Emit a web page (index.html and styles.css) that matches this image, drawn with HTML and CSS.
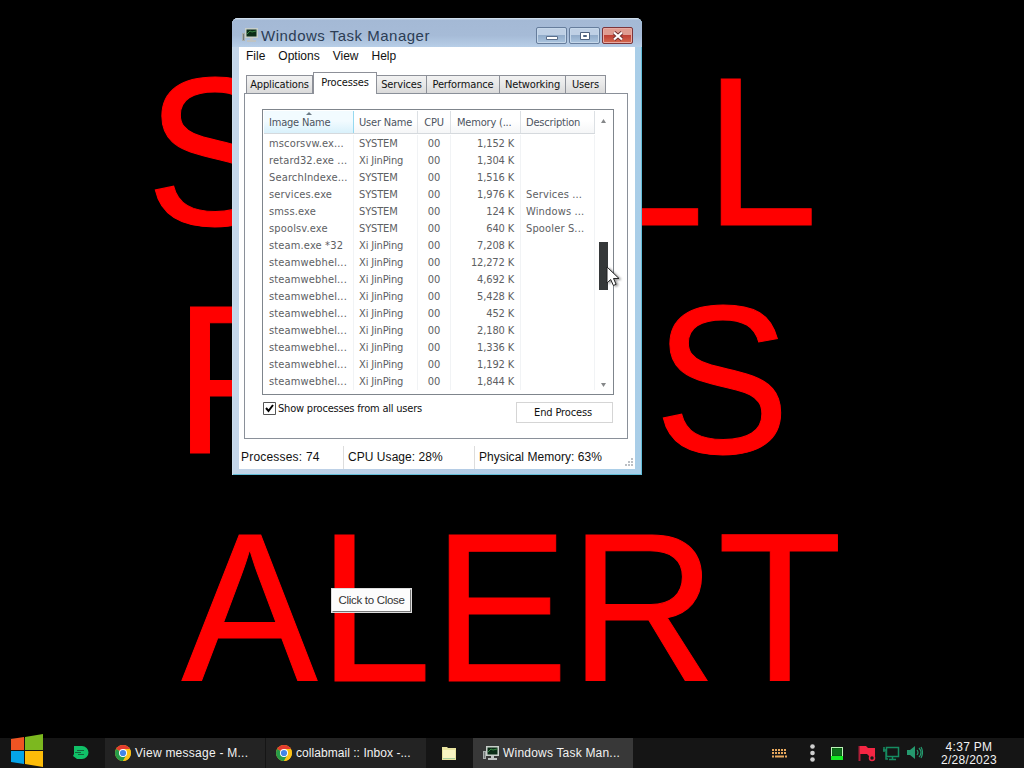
FILE: index.html
```
<!DOCTYPE html>
<html lang="en">
<head>
    <meta charset="UTF-8">
    <meta name="viewport" content="width=device-width, initial-scale=1.0">
    <title>Windows Task Manager</title>
    <link rel="stylesheet" href="styles.css">
</head>
<body>
    <!-- Icons used more than once -->
    <svg class="defs" width="0" height="0">
        <symbol id="chrome" viewBox="0 0 16 16">
            <circle cx="8" cy="8" r="8" fill="#fbc116"/>
            <path d="M8 8L1.1 4A8 8 0 0 1 14.9 4z" fill="#e33b2e"/>
            <path d="M1.1 4A8 8 0 0 0 8 16L11.5 10L8 8z" fill="#269b48"/>
            <path d="M8 4H14.9A8 8 0 0 1 8 16L11.5 10z" fill="#fbc116"/>
            <circle cx="8" cy="8" r="4" fill="#fff"/>
            <circle cx="8" cy="8" r="3.1" fill="#4285e8"/>
        </symbol>
        <symbol id="monitor" viewBox="0 0 16 14">
            <path d="M0 5h3v8H0z" fill="#a9aeac"/>
            <path d="M1 6h1v6H1z" fill="#737978"/>
            <path d="M3 0h13v10H3z" fill="#c8cfca"/>
            <path d="M4.500 1.500h10v7h-10z" fill="#0b2c16"/>
            <path d="M5 6l3-3 2 1 4-1" stroke="#3d8948" fill="none"/>
            <path d="M8 10h3v2h3v2H5v-2h3z" fill="#bfc3c2"/>
        </symbol>
    </svg>

    <div class="desktop">
        <div class="alert">
            <div class="alert-line first"><span>S</span><span>LL</span></div>
            <div class="alert-line second"><span>P</span><span>S</span></div>
            <div class="alert-line third">ALERT</div>
        </div>
        <button class="close-alert">Click to Close</button>

        <!-- Task Manager -->
        <div class="window">
            <div class="titlebar">
                <svg class="title-icon"><use href="#monitor"/></svg>
                <span class="title">Windows Task Manager</span>
                <div class="window-buttons">
                    <div class="window-button"><svg width="14" height="10"><path d="M1.500 5.500h11v3h-11z" fill="#fff" stroke="#5b6f8c"/></svg></div>
                    <div class="window-button"><svg width="12" height="10"><path d="M1.500 1.500h9v7h-9z" fill="#fff" stroke="#4d617e"/><path d="M4.500 4.500h3v1h-3z" fill="#9bb4d4" stroke="#4d617e"/></svg></div>
                    <div class="window-button close"><svg width="12" height="10"><path d="M2 1.500l8 7M10 1.500l-8 7" stroke="#6f3131" stroke-width="4"/><path d="M2 1.500l8 7M10 1.500l-8 7" stroke="#fff" stroke-width="2.200"/></svg></div>
                </div>
            </div>
            <div class="client">
                <div class="menu"><span>File</span><span>Options</span><span>View</span><span>Help</span></div>
                <div class="tabs">
                    <div class="tab applications">Applications</div>
                    <div class="tab processes active">Processes</div>
                    <div class="tab services">Services</div>
                    <div class="tab performance">Performance</div>
                    <div class="tab networking">Networking</div>
                    <div class="tab users">Users</div>
                </div>
                <div class="panel">
                    <div class="list">
                        <div class="table">
                            <div class="row header"><span class="sorted">Image Name<i></i></span><span>User Name</span><span>CPU</span><span>Memory (...</span><span>Description</span></div>
                            <div class="row"><span>mscorsvw.ex...</span><span>SYSTEM</span><span>00</span><span>1,152 K</span><span></span></div>
                            <div class="row"><span>retard32.exe ...</span><span>Xi JinPing</span><span>00</span><span>1,304 K</span><span></span></div>
                            <div class="row"><span>SearchIndexe...</span><span>SYSTEM</span><span>00</span><span>1,516 K</span><span></span></div>
                            <div class="row"><span>services.exe</span><span>SYSTEM</span><span>00</span><span>1,976 K</span><span>Services ...</span></div>
                            <div class="row"><span>smss.exe</span><span>SYSTEM</span><span>00</span><span>124 K</span><span>Windows ...</span></div>
                            <div class="row"><span>spoolsv.exe</span><span>SYSTEM</span><span>00</span><span>640 K</span><span>Spooler S...</span></div>
                            <div class="row"><span>steam.exe *32</span><span>Xi JinPing</span><span>00</span><span>7,208 K</span><span></span></div>
                            <div class="row"><span>steamwebhel...</span><span>Xi JinPing</span><span>00</span><span>12,272 K</span><span></span></div>
                            <div class="row"><span>steamwebhel...</span><span>Xi JinPing</span><span>00</span><span>4,692 K</span><span></span></div>
                            <div class="row"><span>steamwebhel...</span><span>Xi JinPing</span><span>00</span><span>5,428 K</span><span></span></div>
                            <div class="row"><span>steamwebhel...</span><span>Xi JinPing</span><span>00</span><span>452 K</span><span></span></div>
                            <div class="row"><span>steamwebhel...</span><span>Xi JinPing</span><span>00</span><span>2,180 K</span><span></span></div>
                            <div class="row"><span>steamwebhel...</span><span>Xi JinPing</span><span>00</span><span>1,336 K</span><span></span></div>
                            <div class="row"><span>steamwebhel...</span><span>Xi JinPing</span><span>00</span><span>1,192 K</span><span></span></div>
                            <div class="row"><span>steamwebhel...</span><span>Xi JinPing</span><span>00</span><span>1,844 K</span><span></span></div>
                        </div>
                        <div class="scrollbar">
                            <svg width="7" height="4"><path d="M1 4L3.500 0L6 4z" fill="#858789"/></svg>
                            <div class="thumb"></div>
                            <svg width="7" height="4"><path d="M1 0L3.500 4L6 0z" fill="#858789"/></svg>
                        </div>
                    </div>
                    <div class="actions">
                        <div class="check">
                            <svg width="13" height="13"><path d="M.5.5h12v12H.5z" fill="#fff" stroke="#555"/><path d="M3 6l2.500 3L10 3" fill="none" stroke="#000" stroke-width="2"/></svg>
                            <span>Show processes from all users</span>
                        </div>
                        <button class="end-process">End Process</button>
                    </div>
                </div>
                <div class="status">
                    <span>Processes: 74</span><span>CPU Usage: 28%</span><span>Physical Memory: 63%</span>
                    <svg class="grip" width="10" height="10"><path d="M7 0h2v2H7zM4 3h2v2H4zM7 3h2v2H7zM1 6h2v2H1zM4 6h2v2H4zM7 6h2v2H7z" fill="#bcc0c5"/></svg>
                </div>
            </div>
        </div>

        <svg class="cursor" width="16" height="22" viewBox="0 0 16 22"><path d="M1 1v16l3.700-3.500 2.700 6 2.700-1.200-2.600-5.800H13z" fill="#fff" stroke="#222"/></svg>
    </div>

    <div class="taskbar">
        <svg class="start" width="34" height="32" viewBox="0 0 34 32">
            <path d="M1 4l13-2v13H1z" fill="#ef5423"/><path d="M15 2l18-3v16H15z" fill="#7cb81f"/>
            <path d="M1 16h13v13L1 27z" fill="#05a4e9"/><path d="M15 16h18v16l-18-3z" fill="#fdbc09"/>
        </svg>
        <svg class="pinned" width="16" height="14"><path d="M1 0h8a6.500 6.500 0 0 1 0 13H4L0 10l1-2z" fill="#10c067"/><path d="M4 4.500h7M5 8.500h6M2 6.500h6" stroke="#12643b"/></svg>
        <div class="task"><svg width="16" height="16"><use href="#chrome"/></svg><span class="message">View message - M...</span></div>
        <div class="task"><svg width="16" height="16"><use href="#chrome"/></svg><span class="inbox">collabmail :: Inbox -...</span></div>
        <svg class="folder" width="14" height="14"><path d="M0 1h5l1 1h8v12H0z" fill="#e9e4a0"/><path d="M1 4h12v8H1z" fill="#f8f4c3"/><path d="M1 12h12v1H1z" fill="#a9cf9f"/></svg>
        <div class="task current"><svg width="16" height="14"><use href="#monitor"/></svg><span class="manager">Windows Task Man...</span></div>
        <div class="tray">
            <svg width="15" height="9"><path d="M0 1h15M0 4h15" stroke="#e7a85d" stroke-width="2" stroke-dasharray="2 1"/><path d="M0 7.500h2M3 7.500h9M13 7.500h2" stroke="#e7a85d" stroke-width="2"/></svg>
            <svg class="dots" width="5" height="18"><circle cx="2.500" cy="2.500" r="2.300"/><circle cx="2.500" cy="9" r="2.300"/><circle cx="2.500" cy="15.500" r="2.300"/></svg>
            <svg class="meter" width="12" height="13"><path d="M0 0h12v13H0z" fill="#baf5b7"/><path d="M1 1h10v8H1z" fill="#064b0b"/><path d="M1 3h10M1 5h10M1 7h10M3 1v8M5 1v8M7 1v8M9 1v8" stroke="#16912a" stroke-width=".7"/><path d="M0 9h12v4H0z" fill="#15ed25"/></svg>
            <svg class="flag" width="18" height="17"><path d="M1.500 1v15" stroke="#ad1e38" stroke-width="2"/><path d="M2 1h6l2 2h7v8h-6L9 9H2z" fill="#f42643"/><circle cx="14" cy="13" r="2.500" fill="#171717" stroke="#ef2745" stroke-width="1.500"/></svg>
            <svg class="network" width="17" height="15"><path d="M3.500 1.500h12v9h-12zM9.500 10v4M6 13.500h7M1 1v5M0 4h3v9h2" fill="none" stroke="#168c61" stroke-width="1.500"/></svg>
            <svg class="sound" width="16" height="14"><path d="M0 4h3l5-4v13L3 9H0z" fill="#25996e"/><path d="M10 4q2 2.500 0 5M12 2q4 4.500 0 9M14 1q3 5.500 0 11" fill="none" stroke="#25996e" stroke-width="1.200"/></svg>
            <div class="clock"><span>4:37 PM</span><span class="date">2/28/2023</span></div>
        </div>
    </div>
</body>
</html>
```

FILE: styles.css
```
* {
    margin: 0;
    padding: 0;
    box-sizing: border-box;
}

body {
    width: 1024px;
    height: 768px;
    overflow: hidden;
    background: #000;
    color: #111;
    font-family: 'DejaVu Sans Condensed', 'DejaVu Sans', sans-serif;
    font-size: 11px;
    letter-spacing: -0.15px;
    white-space: nowrap;
}

svg {
    display: block;
    flex: none;
}

button {
    font: inherit;
    letter-spacing: inherit;
    color: inherit;
}

.defs {
    position: absolute;
}

.desktop {
    height: 738px;
    padding-top: 38px;
}

/* Large red lettering behind the window */
.alert {
    transform: scaleX(0.96);
    transform-origin: 0 0;
    color: #f00;
    font: 212.5px/228px 'Liberation Sans', Arial, sans-serif;
    font-kerning: none;
    letter-spacing: 0;
    -webkit-text-stroke: 1px #f00;
}

.alert-line {
    display: flex;
    justify-content: space-between;
    height: 228px;
}

.first {
    width: 700px;
    margin-left: 152px;
}

.second {
    width: 642px;
    margin-left: 181px;
}

.third {
    margin-left: 189px;
    letter-spacing: 0.8px;
}

.close-alert {
    position: absolute;
    left: 331px;
    top: 588px;
    width: 81px;
    height: 25px;
    padding-bottom: 1px;
    background: #fcfcfc;
    border: 2px solid;
    border-color: #fff #777 #777 #fff;
    outline: 1px solid #ddd;
    outline-offset: -1px;
    font: 11.5px 'Liberation Sans', Arial, sans-serif;
    letter-spacing: -0.3px;
    color: #333;
}

.window {
    position: absolute;
    left: 232px;
    top: 18px;
    width: 410px;
    height: 457px;
    padding: 0 7px 6px;
    border-radius: 6px 6px 0 0;
    background: linear-gradient(90deg, #c4d5e8, #b6cce5 50%, #a9cee8);
    box-shadow: inset 0 1px #d4e6f4, inset 1px 0 #cadcea, inset -1px -1px #62bdd8;
}

.titlebar {
    display: flex;
    height: 29px;
    margin: 0 -7px;
    padding: 9px 9px 0 10px;
    border-radius: 6px 6px 0 0;
    background: linear-gradient(#dceaf5 0, #a4b9d5 2px, #a6bbd7 60%, #b7cee7);
}

.title-icon {
    width: 16px;
    height: 14px;
    margin-top: 1px;
}

.title {
    flex: 1;
    margin-left: 3px;
    color: #2c3d55;
    font: 15px/18px 'Liberation Sans', Arial, sans-serif;
    letter-spacing: 0.5px;
}

.window-buttons {
    display: flex;
    gap: 2px;
}

.window-button {
    display: flex;
    align-items: center;
    justify-content: center;
    width: 31px;
    height: 17px;
    border: 1px solid #667d9c;
    border-radius: 2px;
    box-shadow: inset 0 0 0 1px #c5d7ea;
    background: linear-gradient(#bfd0e5 45%, #92acca 50%, #abc5df);
}

.window-button.close {
    border-color: #7c353a;
    box-shadow: inset 0 0 0 1px #e8aaa2;
    background: linear-gradient(#df9c91 45%, #bf4035 50%, #d46a4f);
}

.client {
    height: 422px;
    padding-left: 5px;
    background: #fff;
}

.menu {
    display: flex;
    gap: 13px;
    height: 25px;
    padding-left: 2px;
    font: 12px/19px 'Liberation Sans', Arial, sans-serif;
    letter-spacing: 0;
}

.tabs {
    display: flex;
    align-items: flex-end;
    height: 21px;
    padding-left: 2px;
}

.tab {
    height: 18px;
    border: 1px solid #8d9098;
    border-bottom: none;
    border-left-width: 0;
    background: linear-gradient(#f2f2f2, #e8e8e8 50%, #dadada);
    line-height: 17px;
    text-align: center;
}

.tab.applications {
    width: 67px;
    border-left-width: 1px;
}

.tab.active {
    height: 22px;
    margin-bottom: -1px;
    padding-bottom: 2px;
    border-left-width: 1px;
    background: #fff;
    line-height: 19px;
}

.processes {
    width: 64px;
}

.services {
    width: 50px;
}

.performance {
    width: 73px;
}

.networking {
    width: 66px;
}

.users {
    width: 40px;
}

.panel {
    width: 384px;
    height: 346px;
    padding: 15px 14px 0 17px;
    border: 1px solid #8a9099;
}

.list {
    display: flex;
    width: 352px;
    height: 286px;
    border: 1px solid #7f858c;
}

.table {
    width: 332px;
    padding: 1px 0 0 1px;
    color: #5d6063;
}

.row {
    display: grid;
    grid-template-columns: 90px 64px 33px 70px 74px;
    height: 17px;
    line-height: 17px;
}

.row span {
    padding-left: 5px;
    border-right: 1px solid #f1f3f5;
    overflow: hidden;
}

.row span:nth-child(1),
.row span:nth-child(5) {
    letter-spacing: 0.15px;
}

.row span:nth-child(3) {
    padding: 0;
    text-align: center;
}

.row span:nth-child(4) {
    padding-right: 6px;
    text-align: right;
}

.row.header {
    height: 23px;
    margin-bottom: 1px;
    border-bottom: 1px solid #d5d9dd;
    background: linear-gradient(#fff 45%, #f5f6f7);
    line-height: 24px;
    color: #4c5360;
}

.row.header span {
    border-right-color: #dce0e4;
    letter-spacing: -0.2px;
}

.row.header span:nth-child(4) {
    padding-left: 6px;
    padding-right: 0;
    text-align: left;
}

.row.header .sorted {
    position: relative;
    background: linear-gradient(#f2fbff 45%, #d9f1fb);
    border-right-color: #96d9f0;
}

.sorted i {
    position: absolute;
    left: 42px;
    top: 1px;
    border: 3px solid transparent;
    border-top: none;
    border-bottom-color: #6c7b85;
}

.scrollbar {
    display: flex;
    flex-direction: column;
    align-items: center;
    width: 17px;
    padding: 9px 0 7px;
}

.thumb {
    width: 9px;
    height: 48px;
    margin: 119px 0 auto;
    background: #353839;
}

.actions {
    display: flex;
    justify-content: space-between;
    padding: 7px 0 0 1px;
}

.check {
    display: flex;
    gap: 2px;
    color: #111;
    line-height: 13px;
    letter-spacing: -0.2px;
}

.end-process {
    width: 97px;
    height: 21px;
    background: #fff;
    border: 1px solid #d5d5d5;
    padding-right: 3px;
}

.status {
    display: flex;
    height: 23px;
    margin: 7px 0 0 -3px;
    font: 12px/23px 'Liberation Sans', Arial, sans-serif;
    letter-spacing: 0.05px;
}

.status span:nth-child(1) {
    width: 103px;
    border-right: 1px solid #ddd;
    letter-spacing: 0.2px;
}

.status span:nth-child(2) {
    width: 131px;
    padding-left: 4px;
    border-right: 1px solid #ddd;
}

.status span:nth-child(3) {
    flex: 1;
    padding-left: 4px;
}

.grip {
    align-self: flex-end;
    margin: 0 1px 1px 0;
}

.cursor {
    position: absolute;
    left: 606px;
    top: 266px;
    filter: drop-shadow(2px 1px 1px rgba(0, 0, 0, 0.4));
}

.taskbar {
    display: flex;
    align-items: center;
    height: 30px;
    background: #151515;
    color: #f2f2f2;
    font: 12px 'Liberation Sans', Arial, sans-serif;
    letter-spacing: 0;
}

.start {
    margin: -5px 0 0 10px;
    overflow: visible;
}

.pinned {
    margin: 0 16px 0 29px;
}

.task {
    display: flex;
    align-items: center;
    gap: 4px;
    width: 160px;
    height: 30px;
    margin-right: 1px;
    padding-left: 10px;
    background: #232323;
}

.message {
    letter-spacing: 0.25px;
}

.inbox {
    letter-spacing: 0.05px;
}

.manager {
    letter-spacing: 0.2px;
}

.folder {
    margin: 0 17px 0 15px;
}

.task.current {
    background: #383838;
}

.tray {
    display: flex;
    align-items: center;
    margin-left: auto;
    padding-right: 25px;
}

.dots {
    margin-left: 23px;
    fill: #cfcfcf;
}

.meter {
    margin-left: 16px;
}

.flag {
    margin-left: 15px;
}

.network {
    margin-left: 7px;
}

.sound {
    margin-left: 7px;
}

.clock {
    width: 60px;
    margin-left: 16px;
    padding-top: 2px;
    line-height: 13px;
    letter-spacing: 0.3px;
    text-align: center;
}

.clock span {
    display: block;
}
```
